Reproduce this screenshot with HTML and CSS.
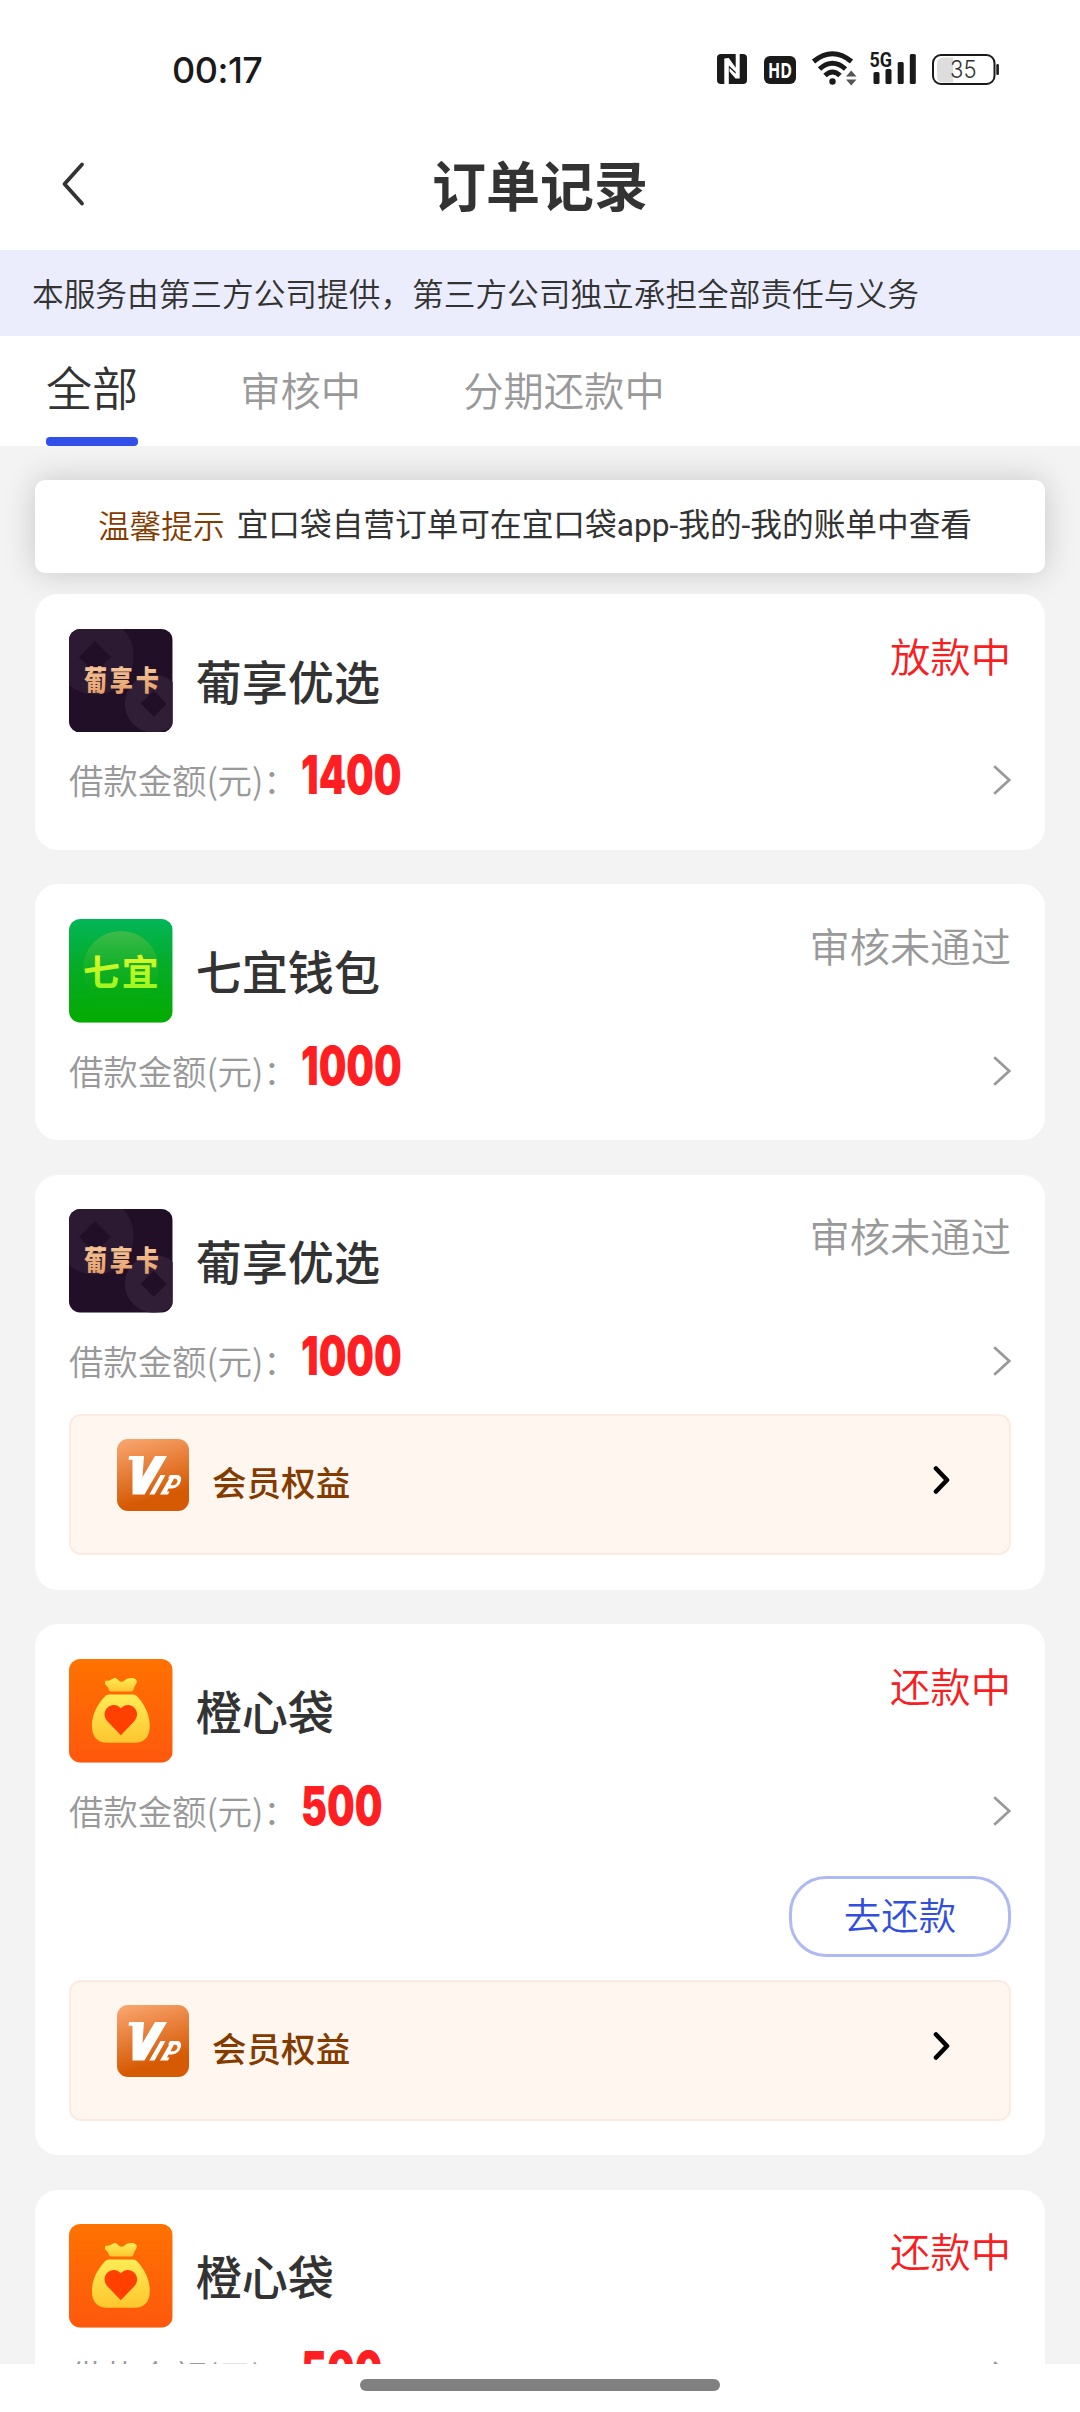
FILE: index.html
```html
<!DOCTYPE html>
<html lang="zh-CN">
<head>
<meta charset="utf-8">
<title>订单记录</title>
<link rel="stylesheet" href="styles.css">
</head>
<body>
<svg class="defs" width="0" height="0" aria-hidden="true">
  <defs>
    <linearGradient id="g-green" x1="0" y1="0" x2="0" y2="1"><stop offset="0" stop-color="#02b658"/><stop offset=".45" stop-color="#05ac28"/><stop offset="1" stop-color="#04ab00"/></linearGradient>
    <linearGradient id="g-disc" x1="0" y1="0" x2="0" y2="1"><stop offset="0" stop-color="#3dbb4a"/><stop offset="1" stop-color="#04ab00" stop-opacity="0"/></linearGradient>
    <linearGradient id="g-lime" x1="0" y1="0" x2="0" y2="1"><stop offset="0" stop-color="#f4f92e"/><stop offset="1" stop-color="#8df51c"/></linearGradient>
    <linearGradient id="g-orange" x1="0" y1="0" x2="0" y2="1"><stop offset="0" stop-color="#ff7200"/><stop offset="1" stop-color="#ff580d"/></linearGradient>
    <linearGradient id="g-bag" x1="0" y1="0" x2="0" y2="1"><stop offset="0" stop-color="#ffec55"/><stop offset="1" stop-color="#fec62f"/></linearGradient>
    <linearGradient id="g-vip" x1="0" y1="0" x2=".3" y2="1"><stop offset="0" stop-color="#faa873"/><stop offset=".9" stop-color="#d65a04"/></linearGradient>
    <linearGradient id="g-gold" x1="0" y1="0" x2="0" y2="1"><stop offset="0" stop-color="#fbd0a5"/><stop offset="1" stop-color="#e0975f"/></linearGradient>
    <clipPath id="c-icon"><rect width="104" height="104" rx="11.5"/></clipPath>
    <symbol id="i-pu" viewBox="0 0 104 104">
      <g clip-path="url(#c-icon)">
        <rect width="104" height="104" fill="#210f27"/>
        <path fill="#2c1932" fill-rule="evenodd" d="M26-12a39 39 0 1 1 0 78a39 39 0 1 1 0-78ZM26 12L10 28l16 16 16-16Z"/>
        <path fill="#301d36" fill-rule="evenodd" d="M85 46a29 29 0 1 1 0 58a29 29 0 1 1 0-58ZM85 62L72 75l13 13 13-13Z"/>
      </g>
      <text class="logo-pu" transform="translate(15 62.500) scale(.8 1)" x="0" y="0" textLength="94">葡享卡</text>
    </symbol>
    <symbol id="i-qi" viewBox="0 0 104 104">
      <rect width="104" height="104" rx="11.5" fill="url(#g-green)"/>
      <circle cx="52" cy="50" r="38" fill="url(#g-disc)"/>
      <text class="logo-qi" x="14" y="67" textLength="76">七宜</text>
    </symbol>
    <symbol id="i-bag" viewBox="0 0 104 104">
      <rect width="104" height="104" rx="11.5" fill="url(#g-orange)"/>
      <path fill="url(#g-bag)" d="M37 21.500c4 1 5-1.500 8-2.300c4-.8 4 3.500 7.500 3.600c3.500-.1 4.500-3.800 8.500-3.500c3.500-.8 7 .5 7 3.200c0 2.500-2 3.500-2.500 5.500l-.8 2.600q-.5 1.900-2 1.900h-20.500q-2 0-2.200-1.500c-.2-3.500-3.500-4-4-6.500q0-2.500 1-3Z"/>
      <path fill="url(#g-bag)" d="M40 35.500h24q3 0 5 2.500c7 8 12 17.500 12 29q0 17-15.500 17h-27Q23 84 23 67c0-11 5-20.500 12-28.500q2-3 5-3Z"/>
      <path fill="#ff4000" d="M52 76.500L39 63c-10-11 5-23 13-13.500c8-9.500 23 2.500 13 13.500Z"/>
    </symbol>
    <symbol id="i-vip" viewBox="0 0 72 72">
      <rect width="72" height="72" rx="11" fill="url(#g-vip)"/>
      <path fill="#fff" d="M12 17H27L25.500 38 38 17H50L27.500 55.500H15.500V20.800H11.500Z"/>
      <path fill="#fff" d="M43.500 36H48.500L37.500 55.500H32.300Z"/>
      <path fill="#fff" fill-rule="evenodd" d="M53 36h6.500q5.500 0 4.500 5.500q-2 7.500-9 8H51.500L50 52.500h2.500L51 55.500H43L52.300 39.500H51ZM57 39.500L53.500 46.300h3q3.500-.8 4-4q0-2.800-3.500-2.800Z"/>
    </symbol>
    <symbol id="i-next" viewBox="0 0 18 30"><path d="M1.200 1.200L16.200 15 1.200 28.800" fill="none" stroke="#999" stroke-width="2.700"/></symbol>
    <symbol id="i-go" viewBox="0 0 18 30"><path d="M3 3.500L14 15 3 26.500" fill="none" stroke="#000" stroke-width="4.600" stroke-linecap="round" stroke-linejoin="round"/></symbol>
  </defs>
</svg>

<div class="screen">
  <div class="statusbar">
    <span class="clock">00:17</span>
    <svg class="sysicons" width="290" height="40" viewBox="714 50 290 40">
      <rect x="717" y="54" width="30" height="30" rx="4" fill="#1a1a1a"/>
      <path fill="#fff" d="M724.300 84.500V58.500L728.800 58l7.200 10.200v4L728.800 65.500V84.500ZM739.700 53.500V78.500H735.500L729.500 71.500V68l6.200 5.800V53.500Z"/>
      <rect x="764" y="56" width="32" height="28" rx="6" fill="#1a1a1a"/>
      <text class="hd" x="768" y="78" textLength="24" lengthAdjust="spacingAndGlyphs">HD</text>
      <g fill="none" stroke="#1a1a1a" stroke-width="5">
        <path d="M813.500 61.500Q832.500 46 851.500 61.500"/>
        <path d="M819.500 69Q832.500 57.500 845.500 69"/>
        <path d="M825 75.500Q832.500 68.500 840 75.500"/>
      </g>
      <circle cx="832.500" cy="81.500" r="3.200" fill="#1a1a1a"/>
      <path d="M846 76.500h10.500L851.200 70.500ZM846 79.500h10.500L851.200 85.500Z" fill="#555"/>
      <text class="g5" x="869.500" y="67" textLength="22.500" lengthAdjust="spacingAndGlyphs">5G</text>
      <g fill="#1a1a1a">
        <rect x="873.500" y="72" width="6" height="12" rx="1.500"/>
        <rect x="885.500" y="69" width="6" height="15" rx="1.500"/>
        <rect x="897.700" y="62" width="6" height="22" rx="1.500"/>
        <rect x="909.800" y="54" width="6" height="30" rx="1.500"/>
      </g>
      <path d="M943 57.500h10v25h-10a6 6 0 0 1-6-6v-13a6 6 0 0 1 6-6Z" fill="#ddd"/>
      <rect x="933" y="55" width="61.500" height="29" rx="8" fill="none" stroke="#1a1a1a" stroke-width="2"/>
      <rect x="996.300" y="64" width="2.600" height="11" rx="1.200" fill="#1a1a1a"/>
      <text class="pct" x="950" y="78" textLength="26.500" lengthAdjust="spacingAndGlyphs">35</text>
    </svg>
  </div>

  <header class="titlebar">
    <svg class="back" width="26" height="46" viewBox="0 0 26 46"><path d="M22 3.500L4.500 23 22 42.500" fill="none" stroke="#333" stroke-width="3.800" stroke-linecap="round" stroke-linejoin="round"/></svg>
    <h1>订单记录</h1>
  </header>

  <div class="notice">本服务由第三方公司提供，第三方公司独立承担全部责任与义务</div>

  <nav class="tabs">
    <span class="tab active">全部</span>
    <span class="tab">审核中</span>
    <span class="tab">分期还款中</span>
  </nav>

  <main class="list">
    <div class="tip"><span class="tip-key">温馨提示</span><span class="tip-text">宜口袋自营订单可在宜口袋app-我的-我的账单中查看</span></div>

    <section class="card">
      <div class="head">
        <svg class="logo"><use href="#i-pu"/></svg><h2>葡享优选</h2><span class="status hot">放款中</span>
      </div>
      <div class="amount"><span class="label">借款金额(元)：</span><b class="num">1400</b><svg class="next"><use href="#i-next"/></svg></div>
    </section>

    <section class="card">
      <div class="head">
        <svg class="logo"><use href="#i-qi"/></svg><h2>七宜钱包</h2><span class="status">审核未通过</span>
      </div>
      <div class="amount"><span class="label">借款金额(元)：</span><b class="num">1000</b><svg class="next"><use href="#i-next"/></svg></div>
    </section>

    <section class="card">
      <div class="head">
        <svg class="logo"><use href="#i-pu"/></svg><h2>葡享优选</h2><span class="status">审核未通过</span>
      </div>
      <div class="amount"><span class="label">借款金额(元)：</span><b class="num">1000</b><svg class="next"><use href="#i-next"/></svg></div>
      <div class="vip"><svg class="vip-icon"><use href="#i-vip"/></svg><span>会员权益</span><svg class="go"><use href="#i-go"/></svg></div>
    </section>

    <section class="card">
      <div class="head">
        <svg class="logo"><use href="#i-bag"/></svg><h2>橙心袋</h2><span class="status hot">还款中</span>
      </div>
      <div class="amount"><span class="label">借款金额(元)：</span><b class="num">500</b><svg class="next"><use href="#i-next"/></svg></div>
      <div class="actions"><button class="repay">去还款</button></div>
      <div class="vip"><svg class="vip-icon"><use href="#i-vip"/></svg><span>会员权益</span><svg class="go"><use href="#i-go"/></svg></div>
    </section>

    <section class="card">
      <div class="head">
        <svg class="logo"><use href="#i-bag"/></svg><h2>橙心袋</h2><span class="status hot">还款中</span>
      </div>
      <div class="amount"><span class="label">借款金额(元)：</span><b class="num">500</b><svg class="next"><use href="#i-next"/></svg></div>
    </section>
  </main>

  <footer class="gesture"><div class="pill"></div></footer>
</div>
</body>
</html>
```
FILE: styles.css
```css
* { box-sizing: border-box; margin: 0; padding: 0; }
body {
  width: 1080px;
  height: 2412px;
  overflow: hidden;
  background: #fff;
  color: #333;
  font-family: "Noto Sans CJK SC", "Noto Sans", sans-serif;
  font-weight: 350;
}
svg { display: block; flex: none; }
.defs { position: absolute; }
.screen { display: flex; flex-direction: column; width: 1080px; height: 2412px; }

.statusbar {
  display: flex;
  justify-content: space-between;
  flex: none;
  height: 114px;
  padding: 50px 76px 0 172px;
}
.clock { font: 450 36px/41px Inter, sans-serif; letter-spacing: -0.5px; color: #1a1a1a; }
.hd { font: 700 22px "Open Sans", sans-serif; fill: #fff; }
.g5 { font: 700 21px Roboto, sans-serif; fill: #1a1a1a; }
.pct { font: 300 24px Inter, sans-serif; fill: #333; }

.titlebar {
  display: grid;
  grid-template-columns: 57px 1fr 57px;
  align-items: center;
  flex: none;
  height: 136px;
  padding: 4px 60px 0;
}
.titlebar h1 { text-align: center; font-size: 54px; line-height: 80px; font-weight: 700; }

.notice {
  flex: none;
  height: 86px;
  padding-left: 32px;
  background: #ebedfd;
  font-size: 31.680px;
  line-height: 84px;
  white-space: nowrap;
}

.tabs {
  display: flex;
  gap: 102px;
  flex: none;
  height: 110px;
  padding-left: 46px;
  color: #999;
  font-size: 40.320px;
  line-height: 106px;
}
.tab.active {
  display: flex;
  flex-direction: column;
  color: #333;
  font-size: 46.080px;
  line-height: 101px;
}
.tab.active::after { content: ""; height: 9px; border-radius: 4px; background: #324fea; }

.list {
  display: flex;
  flex-direction: column;
  flex: 1;
  min-height: 0;
  overflow: hidden;
  padding: 34px 35px 0;
  background: #f3f3f3;
}
.tip {
  display: flex;
  justify-content: center;
  gap: 12px;
  flex: none;
  height: 93px;
  margin-bottom: 21px;
  padding-right: 10px;
  border-radius: 10px;
  background: #fff;
  box-shadow: 0 0 32px rgba(0, 0, 0, .18);
  font-size: 31.680px;
  line-height: 89px;
  white-space: nowrap;
}
.tip-key { color: #833b00; }
.tip-text { font-family: Roboto, "Noto Sans CJK SC", sans-serif; font-weight: 375; line-height: 92px; }

.card {
  flex: none;
  margin-bottom: 34.700px;
  padding: 34.560px 34px;
  border-radius: 23px;
  background: #fff;
}
.head { display: flex; height: 103.700px; }
.logo { width: 103.700px; height: 103.700px; }
.head h2 { flex: 1; margin-left: 23px; font-size: 46.080px; line-height: 102px; font-weight: 500; }
.status { font-size: 40.320px; line-height: 52px; color: #999; }
.status.hot { color: #f8201f; }
.amount { display: flex; height: 83px; }
.label { width: 232px; font-size: 34.560px; line-height: 95px; letter-spacing: -0.2px; color: #999; white-space: nowrap; }
.num {
  flex: 1;
  font: 900 54px/86px Inter, sans-serif;
  color: #ff1f22;
  transform: scaleX(.722);
  transform-origin: 0 50%;
}
.next { width: 18px; height: 30px; margin-top: 33px; }
.actions { display: flex; justify-content: flex-end; padding: 30px 0 5px; }
.repay {
  width: 222px;
  height: 81px;
  border: 3px solid #afb9f3;
  border-radius: 37px;
  background: #fff;
  color: #324fdb;
  font: 350 37.440px/67px "Noto Sans CJK SC", sans-serif;
  padding-bottom: 4px;
}
.vip {
  display: flex;
  height: 141px;
  margin-top: 18px;
  padding: 23px 58px 0 46px;
  border: 2px solid #fbebe1;
  border-radius: 12px;
  background: #fff6f0;
  color: #833b00;
  font-size: 34.560px;
  line-height: 85px;
  font-weight: 500;
}
.vip span { flex: 1; margin-left: 23px; }
.vip-icon { width: 72px; height: 72px; }
.go { width: 18px; height: 30px; margin-top: 26px; }
.logo-pu { font: 900 29px "Noto Sans CJK SC", sans-serif; fill: url(#g-gold); }
.logo-qi { font: 700 37px "Noto Sans CJK SC", sans-serif; fill: url(#g-lime); }

.gesture { display: flex; justify-content: center; flex: none; height: 48px; padding-top: 15px; background: #fff; }
.pill { width: 360px; height: 12px; border-radius: 6px; background: #808080; }
```
